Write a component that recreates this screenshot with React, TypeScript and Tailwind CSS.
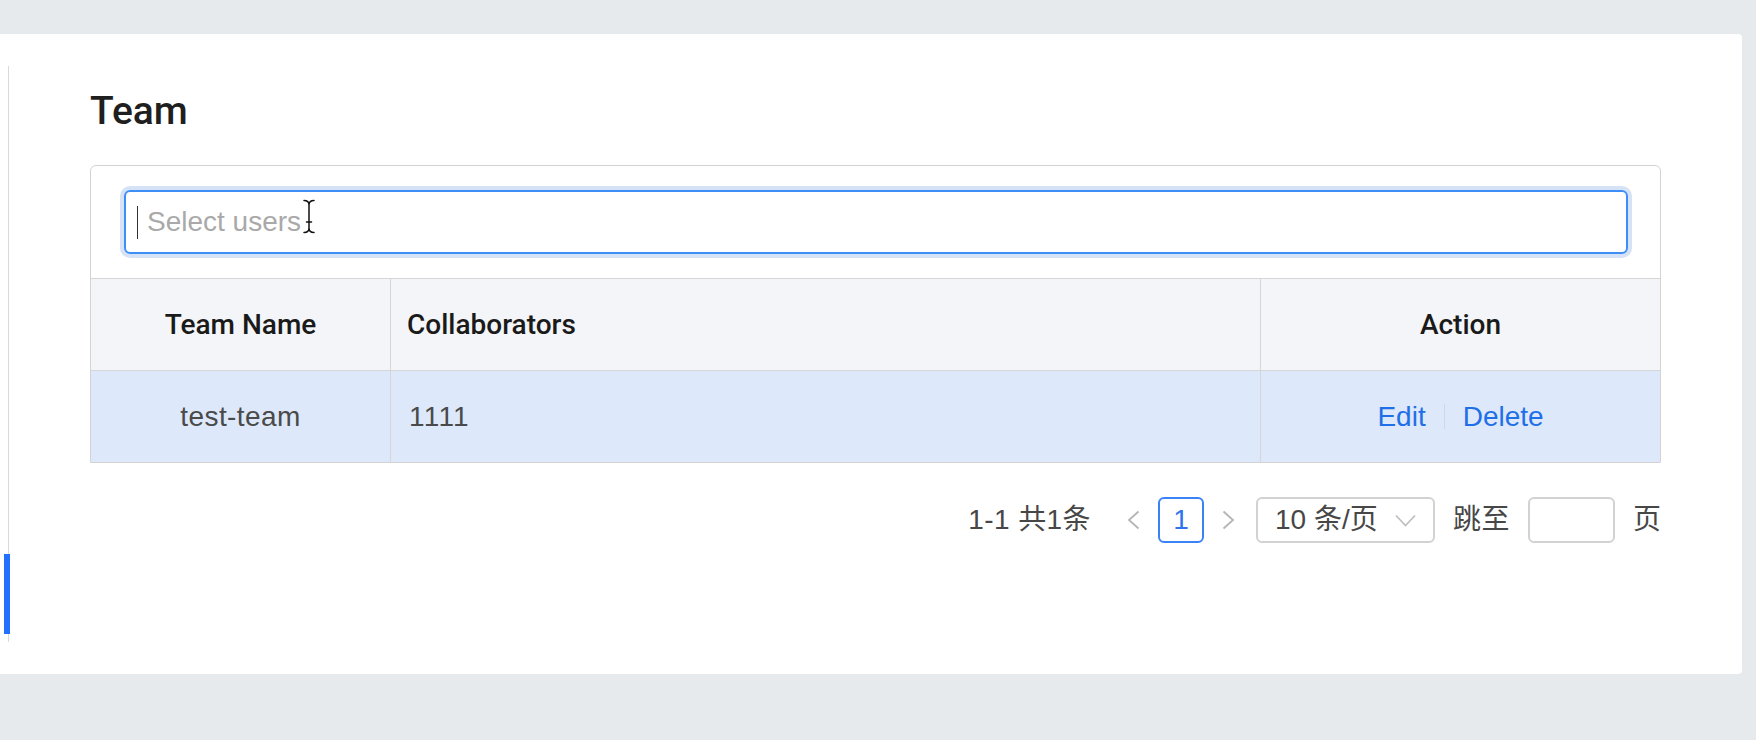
import React from 'react';

const ChevronLeft = () => (
  <svg width="13" height="20" viewBox="0 0 13 20" fill="none">
    <polyline points="11.5,1.5 2,10 11.5,18.5" stroke="#b5b5b5" strokeWidth="1.8" />
  </svg>
);

const ChevronRight = () => (
  <svg width="13" height="20" viewBox="0 0 13 20" fill="none">
    <polyline points="1.5,1.5 11,10 1.5,18.5" stroke="#b5b5b5" strokeWidth="1.8" />
  </svg>
);

const ChevronDown = () => (
  <svg width="21" height="13" viewBox="0 0 21 13" fill="none">
    <polyline points="1,1.5 10.5,11.5 20,1.5" stroke="#bdbdbd" strokeWidth="1.6" />
  </svg>
);

// macOS style text cursor sitting over the input
const IBeam = () => (
  <svg width="14" height="35" viewBox="0 0 14 35" fill="none">
    <path
      d="M2 1.5 Q7 1.5 7 6 Q7 1.5 12 1.5 M7 6 L7 29 M2 33.5 Q7 33.5 7 29 Q7 33.5 12 33.5 M4.5 23 L9.5 23"
      stroke="#ffffff"
      strokeWidth="3.2"
      strokeLinecap="round"
    />
    <path
      d="M2 1.5 Q7 1.5 7 6 Q7 1.5 12 1.5 M7 6 L7 29 M2 33.5 Q7 33.5 7 29 Q7 33.5 12 33.5 M4.5 23 L9.5 23"
      stroke="#111111"
      strokeWidth="1.5"
      strokeLinecap="round"
    />
  </svg>
);

export default function App() {
  return (
    <div className="w-[1756px] h-[740px] bg-[#e7eaed] pt-[34px] font-['Liberation_Sans','Noto_Sans_CJK_SC',sans-serif]">
      <div className="w-[1742px] h-[640px] bg-white rounded-r-[4px] flex">
        {/* anchor rail */}
        <div className="ml-[8px] mt-[32px] h-[576px] w-px bg-[#d9d9d9] relative shrink-0">
          <div className="absolute left-[-4px] top-[488px] w-[6px] h-[80px] bg-[#2370ff]" />
        </div>

        <div className="ml-[81px] pt-[58px] w-[1571px]">
          <h1 className="font-['Roboto',sans-serif] text-[39px] leading-[38px] font-medium text-[#1f1f1f]">Team</h1>

          <div className="mt-[35px] border border-[#d3d3d3] rounded-t-[6px]">
            <div className="pt-[24px] pb-[24px] pl-[33px] pr-[32px] border-b border-[#d6d6d6]">
              <div className="relative h-[64px] border-2 border-[#3d8ef7] rounded-[6px] ring-4 ring-[#d6e3f6] flex items-center">
                <span className="ml-[11px] w-px h-[33px] bg-[#333333]" />
                <span className="ml-[9px] text-[28px] leading-[28px] text-[#a9a9a9]">Select users</span>
                <div className="absolute left-[176px] top-[7px]">
                  <IBeam />
                </div>
              </div>
            </div>

            <div className="grid grid-cols-[300px_870px_1fr] h-[92px] bg-[#f3f5f8] border-b border-[#d6d6d6] font-['Roboto',sans-serif] text-[28px] leading-[28px] font-medium text-[#1a1a1a]">
              <div className="flex items-center justify-center border-r border-[#d6d6d6]">Team Name</div>
              <div className="flex items-center pl-[16px] border-r border-[#d6d6d6]">Collaborators</div>
              <div className="flex items-center justify-center">Action</div>
            </div>

            <div className="grid grid-cols-[300px_870px_1fr] h-[91px] bg-[#dde9fa] text-[28px] leading-[28px] text-[#4a4a4a]">
              <div className="flex items-center justify-center border-r border-[#d6d6d6] tracking-[0.4px]">test-team</div>
              <div className="flex items-center pl-[18px] border-r border-[#d6d6d6] tracking-[1.2px]">1111</div>
              <div className="flex items-center justify-center text-[#1f6fe8]">
                <span>Edit</span>
                <span className="mx-[18px] w-px h-[25px] bg-[#cfd8e6]" />
                <span>Delete</span>
              </div>
            </div>
          </div>

          <div className="mt-[34px] flex items-center justify-end text-[28px] leading-[28px] text-[#474747]">
            <span className="tracking-[0.4px]">1-1 共1条</span>
            <span className="ml-[36px] flex items-center">
              <ChevronLeft />
            </span>
            <div className="ml-[18px] w-[46px] h-[46px] rounded-[6px] border-2 border-[#3a82f6] flex items-center justify-center text-[#2f74ee]">
              1
            </div>
            <span className="ml-[18px] flex items-center">
              <ChevronRight />
            </span>
            <div className="ml-[21px] w-[179px] h-[46px] rounded-[6px] border-2 border-[#d2d2d2] flex items-center justify-between pl-[17px] pr-[17px]">
              <span>10 条/页</span>
              <ChevronDown />
            </div>
            <span className="ml-[18px] tracking-[0.5px]">跳至</span>
            <div className="ml-[18px] w-[87px] h-[46px] rounded-[6px] border-2 border-[#d2d2d2]" />
            <span className="ml-[18px]">页</span>
          </div>
        </div>
      </div>
    </div>
  );
}
